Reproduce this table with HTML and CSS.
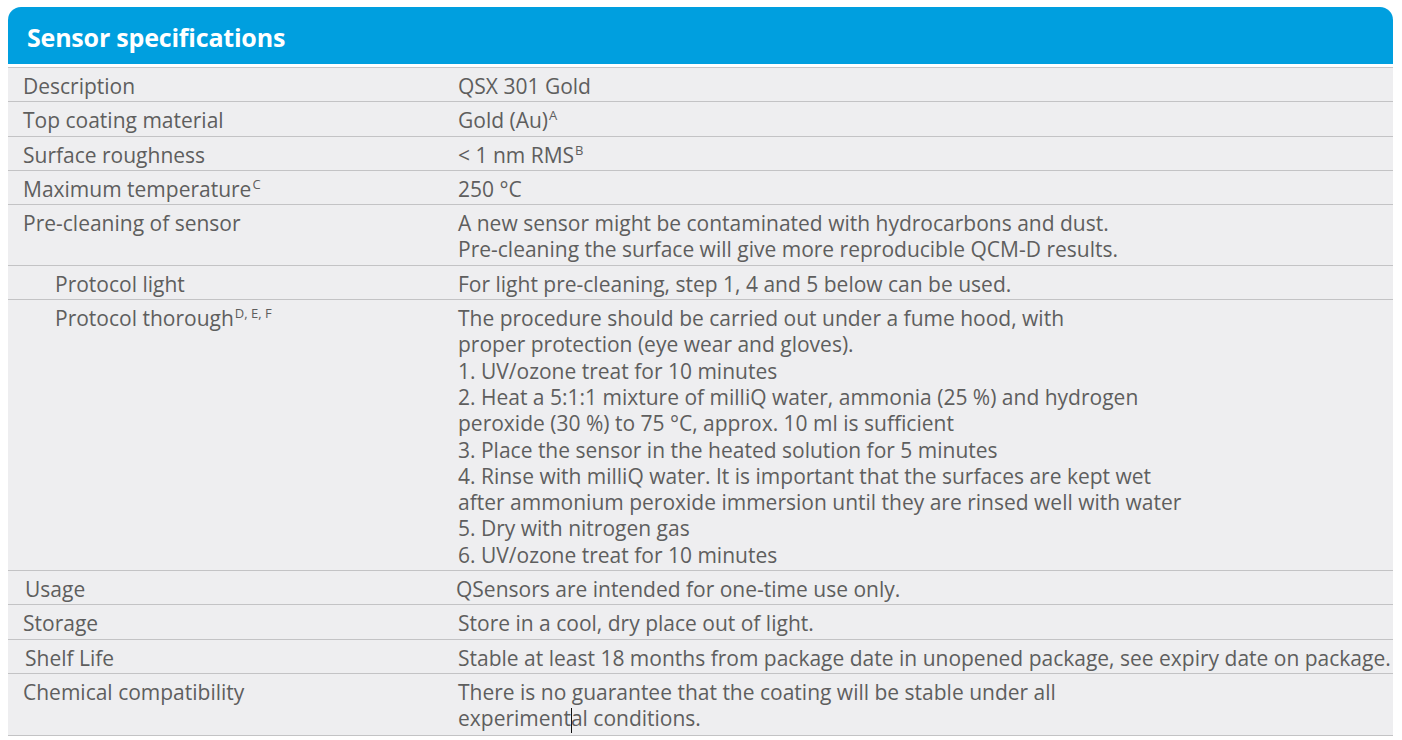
FILE: index.html
```html
<!DOCTYPE html>
<html>
<head>
<meta charset="utf-8">
<link rel="stylesheet" href="styles.css">
</head>
<body>
<div class="spec">
  <div class="spec-head">Sensor specifications</div>
  <div class="spec-table">
    <div class="row"><div class="lab">Description</div><div class="val">QSX 301 Gold</div></div>
    <div class="row"><div class="lab">Top coating material</div><div class="val">Gold (Au)<sup>A</sup></div></div>
    <div class="row"><div class="lab">Surface roughness</div><div class="val">&lt; 1 nm RMS<sup>B</sup></div></div>
    <div class="row"><div class="lab">Maximum temperature<sup>C</sup></div><div class="val">250 °C</div></div>
    <div class="row"><div class="lab">Pre-cleaning of sensor</div><div class="val">A new sensor might be contaminated with hydrocarbons and dust.<br>Pre-cleaning the surface will give more reproducible QCM-D results.</div></div>
    <div class="row"><div class="lab indent">Protocol light</div><div class="val">For light pre-cleaning, step 1, 4 and 5 below can be used.</div></div>
    <div class="row"><div class="lab indent">Protocol thorough<sup>D, E, F</sup></div><div class="val">The procedure should be carried out under a fume hood, with<br>proper protection (eye wear and gloves).<br>1. UV/ozone treat for 10 minutes<br>2. Heat a 5:1:1 mixture of milliQ water, ammonia (25 %) and hydrogen<br>peroxide (30 %) to 75 °C, approx. 10 ml is sufficient<br>3. Place the sensor in the heated solution for 5 minutes<br>4. Rinse with milliQ water. It is important that the surfaces are kept wet<br>after ammonium peroxide immersion until they are rinsed well with water<br>5. Dry with nitrogen gas<br>6. UV/ozone treat for 10 minutes</div></div>
    <div class="row"><div class="lab shift">Usage</div><div class="val shift-l">QSensors are intended for one-time use only.</div></div>
    <div class="row"><div class="lab">Storage</div><div class="val">Store in a cool, dry place out of light.</div></div>
    <div class="row"><div class="lab shift">Shelf Life</div><div class="val">Stable at least 18 months from package date in unopened package, see expiry date on package.</div></div>
    <div class="row"><div class="lab">Chemical compatibility</div><div class="val">There is no guarantee that the coating will be stable under all<br>experiment<span class="caret"></span>al conditions.</div></div>
  </div>
</div>
</body>
</html>
```
FILE: styles.css
```css
html, body {
  margin: 0;
  padding: 0;
  background: #ffffff;
}
body {
  padding: 7px 9px 0 8px;
  font-family: "Open Sans", "Noto Sans", sans-serif;
  color: #5e5e5e;
}
.spec {
  width: 1385px;
}
.spec-head {
  height: 57px;
  background: #009fdf;
  border-radius: 13px 13px 0 0;
  color: #ffffff;
  font-weight: 700;
  font-size: 25px;
  line-height: 61px;
  padding-left: 19px;
  letter-spacing: -0.2px;
  overflow: hidden;
}
.spec-table {
  margin-top: 3px;
  background: #eeeef0;
  border-top: 1px solid #c6c6c8;
}
.row {
  display: grid;
  grid-template-columns: 435px 1fr;
  border-bottom: 1px solid #c3c3c5;
  padding: 5px 0 2px;
  font-size: 21px;
  line-height: 26.3px;
}
.lab {
  padding-left: 15px;
}
.lab.indent {
  padding-left: 47px;
}
.lab.shift {
  padding-left: 17px;
}
.val {
  padding-left: 15px;
  white-space: nowrap;
}
.val.shift-l {
  padding-left: 13px;
}
sup {
  font-size: 13px;
  line-height: 0;
  vertical-align: 8px;
  margin-left: 1px;
}
.caret {
  display: inline-block;
  width: 0;
  height: 25px;
  border-left: 1px solid #111;
  vertical-align: -7px;
  margin-right: -1px;
}
```
